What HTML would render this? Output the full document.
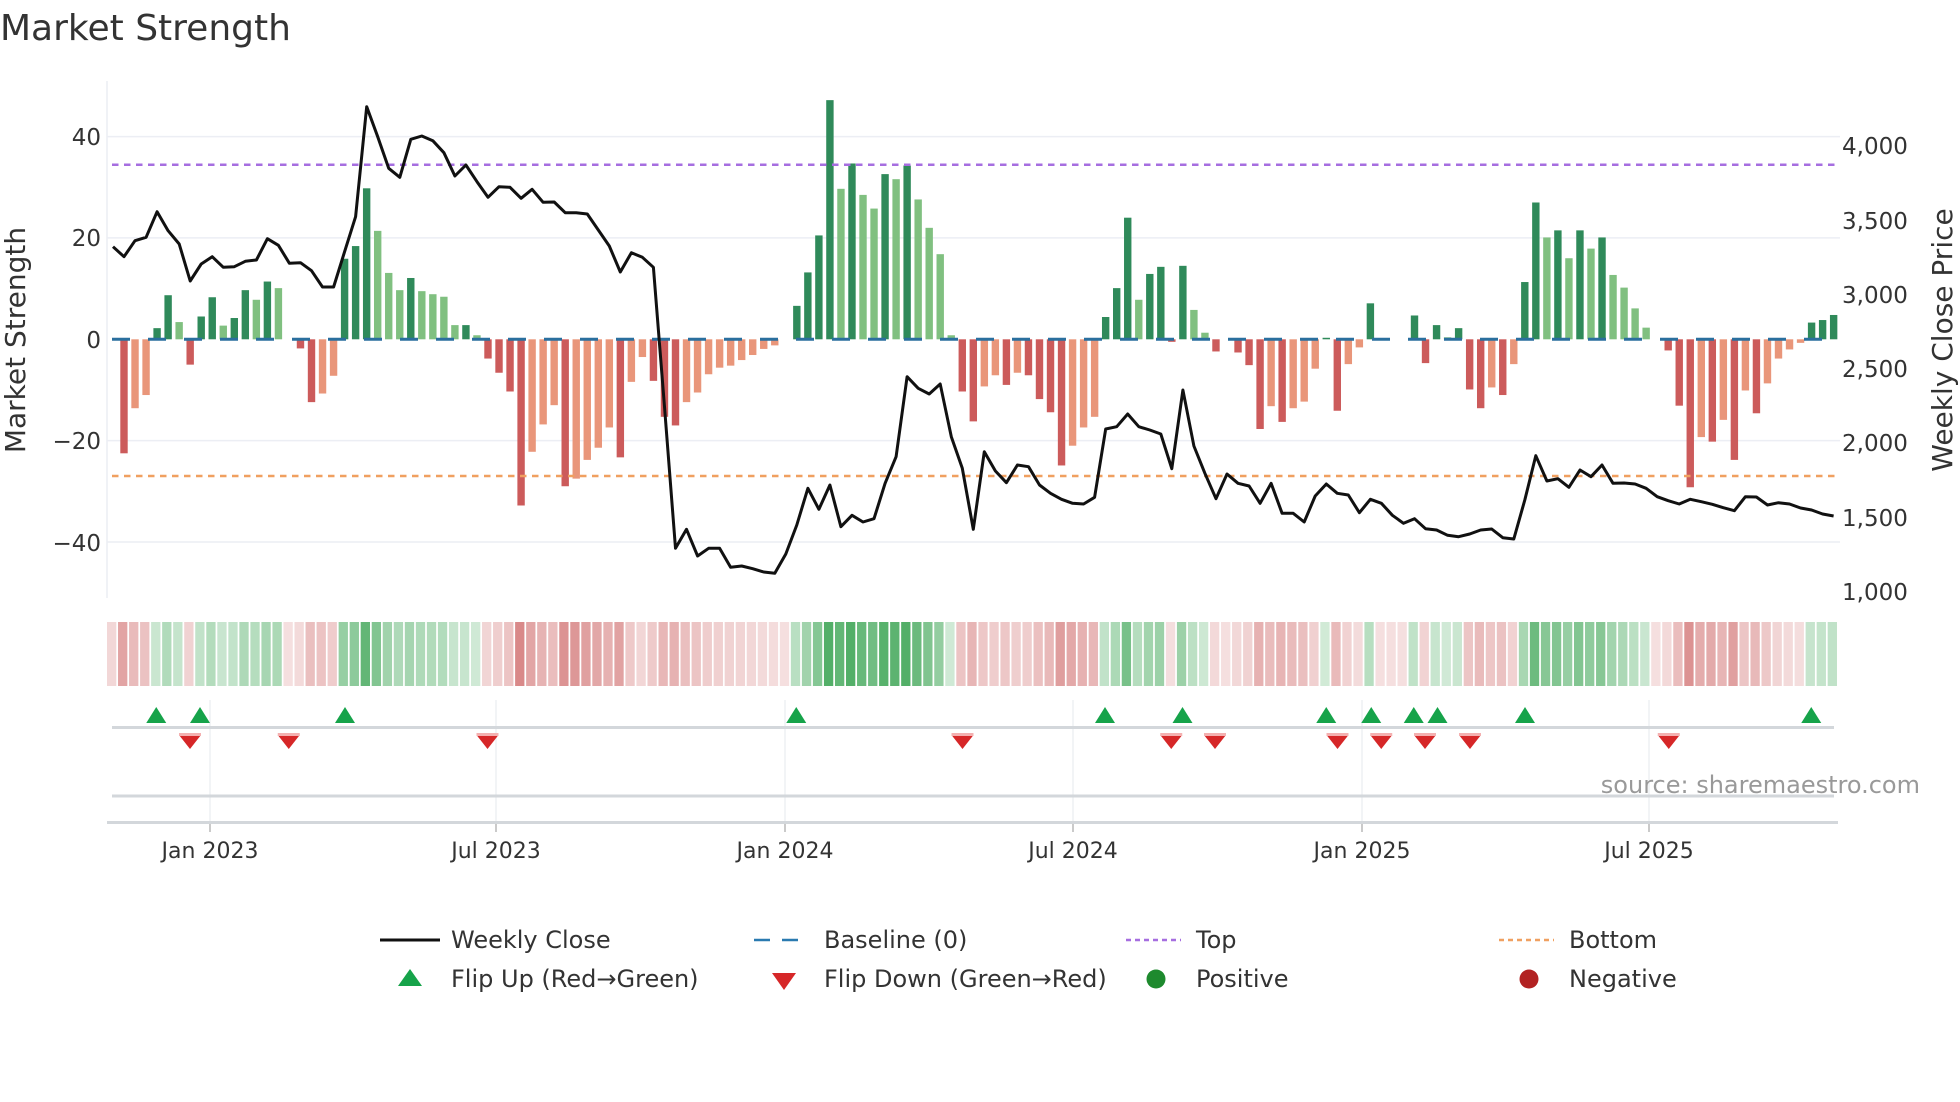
<!DOCTYPE html>
<html><head><meta charset="utf-8"><style>
html,body{margin:0;padding:0;background:#fff;width:1960px;height:1102px;overflow:hidden}
svg{display:block;font-family:"DejaVu Sans","Liberation Sans",sans-serif}
</style></head><body>
<svg id="s" width="1960" height="1102" viewBox="0 0 1960 1102" xmlns="http://www.w3.org/2000/svg">
<text x="0" y="40" font-size="36" fill="#333">Market Strength</text>
<g id="grid"></g>
<g id="bars"></g>
<g id="strip"></g>
<g id="marks"></g>
<g fill="#333" font-size="23" text-anchor="end">
<text x="101" y="145">40</text><text x="101" y="246">20</text><text x="101" y="348">0</text><text x="101" y="449">−20</text><text x="101" y="551">−40</text>
</g>
<g fill="#333" font-size="23">
<text x="1842" y="154">4,000</text><text x="1842" y="229">3,500</text><text x="1842" y="303">3,000</text><text x="1842" y="377">2,500</text><text x="1842" y="451">2,000</text><text x="1842" y="526">1,500</text><text x="1842" y="600">1,000</text>
</g>
<text transform="translate(25,340) rotate(-90)" font-size="28" fill="#333" text-anchor="middle">Market Strength</text>
<text transform="translate(1952,340) rotate(-90)" font-size="28" fill="#333" text-anchor="middle">Weekly Close Price</text>
<text x="1920" y="793" font-size="24" fill="#999" text-anchor="end">source: sharemaestro.com</text>
<g fill="#333" font-size="22" text-anchor="middle">
<text x="210" y="858">Jan 2023</text><text x="496" y="858">Jul 2023</text><text x="785" y="858">Jan 2024</text><text x="1073" y="858">Jul 2024</text><text x="1362" y="858">Jan 2025</text><text x="1649" y="858">Jul 2025</text>
</g>
<g font-size="24" fill="#333">
<line x1="380" y1="940" x2="440" y2="940" stroke="#111" stroke-width="3"/><text x="451" y="948">Weekly Close</text>
<line x1="754" y1="940" x2="806" y2="940" stroke="#2a7ab0" stroke-width="2.5" stroke-dasharray="16,12"/><text x="824" y="948">Baseline (0)</text>
<line x1="1126" y1="940" x2="1181" y2="940" stroke="#a66ee0" stroke-width="2.5" stroke-dasharray="5,4"/><text x="1196" y="948">Top</text>
<line x1="1499" y1="940" x2="1554" y2="940" stroke="#f0a060" stroke-width="2.5" stroke-dasharray="5,4"/><text x="1569" y="948">Bottom</text>
<path d="M410 969 L422 986 L398 986Z" fill="#16a34a"/><text x="451" y="987">Flip Up (Red→Green)</text>
<path d="M772 973 L796 973 L784 990Z" fill="#d62728"/><text x="824" y="987">Flip Down (Green→Red)</text>
<circle cx="1156" cy="979" r="9.5" fill="#1e8a2e"/><text x="1196" y="987">Positive</text>
<circle cx="1529" cy="979" r="9.5" fill="#b22222"/><text x="1569" y="987">Negative</text>
</g>
</svg>
<script>
var NS="http://www.w3.org/2000/svg";
function el(p,t,a){var e=document.createElementNS(NS,t);for(var k in a)e.setAttribute(k,a[k]);document.getElementById(p).appendChild(e);return e;}
var bars="-22.5R -13.6O -11O 2.2D 8.7D 3.4L -5R 4.5D 8.3D 2.7L 4.2D 9.7D 7.8L 11.4D 10.1L 0L -1.8R -12.4R -10.7O -7.2O 15.9D 18.4D 29.8D 21.4L 13.1L 9.7L 12.1D 9.5L 8.9L 8.4L 2.8L 2.8D 0.8L -3.8R -6.6R -10.3R -32.8R -22.2O -16.8O -13O -29R -27.5O -23.8O -21.4O -17.4O -23.3R -8.4O -3.5O -8.2R -15.3R -17R -12.4O -10.5O -6.9O -5.6O -5.2O -4.1O -3.1O -1.9O -1.2O 0L 6.6D 13.2D 20.5D 47.2D 29.7L 34.7D 28.5L 25.8L 32.6D 31.6L 34.3D 27.6L 22L 16.8L 0.8L -10.3R -16.2R -9.3O -7.1O -9R -6.6O -7.1R -11.8R -14.4R -24.9R -21O -17.4O -15.3O 4.4D 10.1D 24D 7.8L 12.9D 14.3D -0.5R 14.5D 5.8L 1.3L -2.4R 0L -2.6R -5.1R -17.7R -13.2O -16.3R -13.6O -12.3O -5.8O 0.3D -14.1R -4.9O -1.6O 7.1D 0L 0L 0L 4.7D -4.7R 2.8D 0.4L 2.2D -9.9R -13.6R -9.5O -11R -4.9O 11.3D 27D 20.1L 21.5D 16L 21.5D 17.9L 20.1D 12.7L 10.2L 6.1L 2.3L 0L -2.2R -13.1R -29.2R -19.3O -20.2R -15.9O -23.8R -10.1O -14.6R -8.7O -3.8O -2O -0.7O 3.3D 3.8D 4.8D".split(" ");
var col={D:"#2f8a5a",L:"#80c080",R:"#cc5b5b",O:"#e9967a"};
var Z=339.3,U=5.067;
[136.6,237.9,440.6,542].forEach(function(y){el("grid","line",{x1:107,x2:1840,y1:y,y2:y,stroke:"#eceef4","stroke-width":1.5});});
el("grid","line",{x1:107,x2:107,y1:81,y2:598,stroke:"#eceef4","stroke-width":1.5});
[210,496,785,1073,1362,1649].forEach(function(x){el("grid","line",{x1:x,x2:x,y1:700,y2:832,stroke:"#eef0f3","stroke-width":1.5});el("grid","line",{x1:x,x2:x,y1:822,y2:832,stroke:"#bbb","stroke-width":1.5});});
el("grid","line",{x1:112,x2:1834,y1:727.5,y2:727.5,stroke:"#d3d7db","stroke-width":3});
el("grid","line",{x1:112,x2:1834,y1:796,y2:796,stroke:"#d3d7db","stroke-width":3});
el("grid","line",{x1:107,x2:1838,y1:822.5,y2:822.5,stroke:"#d3d7db","stroke-width":3});
bars.forEach(function(b,i){var t=b.slice(-1),v=parseFloat(b);var x=124+11.03*i;if(v!==0){var h=Math.abs(v)*U;el("bars","rect",{x:x-3.7,width:7.4,y:v>0?Z-h:Z,height:h,fill:col[t]});}});
el("bars","line",{x1:112,x2:1838,y1:Z,y2:Z,stroke:"#2a6f9e","stroke-width":3,"stroke-dasharray":"18,18"});
el("bars","line",{x1:112,x2:1836,y1:164.7,y2:164.7,stroke:"#a66ee0","stroke-width":2.5,"stroke-dasharray":"6.5,5.5"});
el("bars","line",{x1:112,x2:1836,y1:476,y2:476,stroke:"#f0a060","stroke-width":2.5,"stroke-dasharray":"6.5,5.5"});
var zy=[500,530,482,472,395,452,492,603,552,530,562,560,544,540,476,496,550,548,572,621,621,515,410,80,170,265,292,178,168,182,218,288,255,305,352,320,322,355,328,367,366,398,
398,402,450,498,576,518,532,562,980,1405,1348,1428,1405,1405,1462,1458,1466,1476,1480,1422,1335,1225,1288,1215,1340,1306,1326,1316,1210,1130,890,925,942,912,1070,1165,1348,1115,1173,1208,1155,
1160,1215,1240,1258,1270,1272,1252,1047,1040,1002,1040,1050,1062,1166,930,1098,1180,1256,1182,1210,1218,1270,1210,1300,1300,1326,1248,1212,1240,1245,1298,1258,1270,1306,1330,1316,1346,1350,1366,1370,1362,
1350,1347,1373,1377,1260,1127,1203,1196,1222,1170,1190,1155,1210,1209,1212,1225,1250,1262,1272,1258,1265,1273,1283,1292,1250,1251,1275,1268,1272,1284,1290,1302,1308];
var pts=zy.map(function(y,k){return (124+11.03*(k-1)).toFixed(1)+","+(80+y/3).toFixed(1);}).join(" ");
el("bars","polyline",{points:pts,fill:"none",stroke:"#111","stroke-width":3,"stroke-linejoin":"round"});
function mix(c,a){return "rgb("+c.map(function(v){return Math.round(255+(v-255)*a);}).join(",")+")";}
for(var j=-1;j<156;j++){var v=j<0?-3:parseFloat(bars[j]);var a=0.22+0.62*Math.min(Math.abs(v)/34,1);var c=v>0?mix([50,160,75],a):mix([200,85,85],a*0.85);
el("strip","rect",{x:107+11.03*(j+1),width:9.3,y:622,height:64,fill:c});}
[125,160,276,637,884,946,1061,1097,1131,1150,1220,1449].forEach(function(x){x*=1.25;el("marks","path",{d:"M"+x+" 707 L"+(x+10)+" 723 L"+(x-10)+" 723Z",fill:"#16a34a"});});
[152,231,390,770,937,972,1070,1105,1140,1176,1335].forEach(function(x){x*=1.25;el("marks","path",{d:"M"+(x-11)+" 735 L"+(x+11)+" 735 L"+x+" 749Z",fill:"#d62728"});el("marks","rect",{x:x-11,y:733,width:22,height:3,fill:"#f4b0b0"});});
</script>
</body></html>
